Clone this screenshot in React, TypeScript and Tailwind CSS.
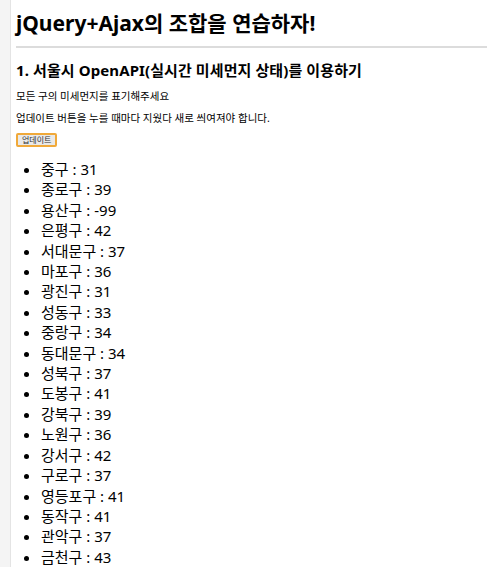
const guList: [string, number][] = [
  ['중구', 31],
  ['종로구', 39],
  ['용산구', -99],
  ['은평구', 42],
  ['서대문구', 37],
  ['마포구', 36],
  ['광진구', 31],
  ['성동구', 33],
  ['중랑구', 34],
  ['동대문구', 34],
  ['성북구', 37],
  ['도봉구', 41],
  ['강북구', 39],
  ['노원구', 36],
  ['강서구', 42],
  ['구로구', 37],
  ['영등포구', 41],
  ['동작구', 41],
  ['관악구', 37],
  ['금천구', 43],
]

export default function App() {
  return (
    <div className="flex min-h-screen bg-white text-black font-['Noto_Sans','Noto_Sans_CJK_KR',sans-serif]">
      {/* left gutter */}
      <div className="w-[11px] shrink-0 border-r border-[#e4e4e4] bg-[#f4f4f4]" />

      <div className="flex-1 pl-[5px]">
        <h1 className="mt-[9px] text-[21px] leading-[28px] font-bold">
          jQuery+Ajax의 조합을 연습하자!
        </h1>
        <hr className="mt-[9px] border-t-2 border-[#dcdcdc]" />

        <h2 className="mt-[12px] text-[15px] leading-[20px] font-bold tracking-[0.1px]">
          1. 서울시 OpenAPI(실시간 미세먼지 상태)를 이용하기
        </h2>
        <p className="mt-[11px] text-[10.5px] leading-[10px]">모든 구의 미세먼지를 표기해주세요</p>
        <p className="mt-[12px] text-[10.5px] leading-[10px]">
          업데이트 버튼을 누를 때마다 지웠다 새로 씌여져야 합니다.
        </p>
        <button className="mt-[10px] flex h-[14px] items-center rounded-[2px] border-2 border-[#f0a93a] bg-[#e9e9e9] px-[4px] text-[8px] leading-none text-[#333]">
          업데이트
        </button>

        <ul className="mt-[12px] list-disc pl-[25px] text-[15px] leading-[20.4px]">
          {guList.map(([name, value]) => (
            <li key={name}>
              {name} : {value}
            </li>
          ))}
        </ul>
      </div>
    </div>
  )
}
